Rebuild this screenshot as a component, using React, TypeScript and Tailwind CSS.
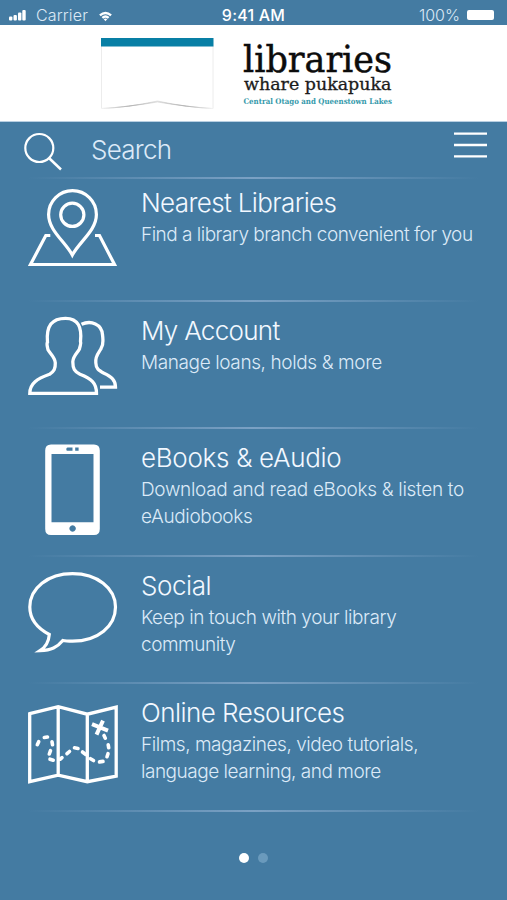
import type { ReactNode } from 'react';

interface MenuItem {
  title: string;
  titleClass: string;
  lines: { text: string; className: string }[];
  icon: ReactNode;
}

const items: MenuItem[] = [
  {
    title: 'Nearest Libraries',
    titleClass: 'tracking-[-0.63px]',
    lines: [{ text: 'Find a library branch convenient for you', className: 'tracking-[-0.51px]' }],
    icon: <PinIcon />,
  },
  {
    title: 'My Account',
    titleClass: 'tracking-[-0.7px]',
    lines: [{ text: 'Manage loans, holds & more', className: 'tracking-[-0.39px]' }],
    icon: <PeopleIcon />,
  },
  {
    title: 'eBooks & eAudio',
    titleClass: 'tracking-[-0.3px]',
    lines: [
      { text: 'Download and read eBooks & listen to', className: 'tracking-[-0.32px]' },
      { text: 'eAudiobooks', className: 'tracking-[-0.36px]' },
    ],
    icon: <TabletIcon />,
  },
  {
    title: 'Social',
    titleClass: 'tracking-[-0.45px]',
    lines: [
      { text: 'Keep in touch with your library', className: 'tracking-[-0.43px]' },
      { text: 'community', className: 'tracking-[-0.45px]' },
    ],
    icon: <SpeechIcon />,
  },
  {
    title: 'Online Resources',
    titleClass: 'tracking-[-0.54px]',
    lines: [
      { text: 'Films, magazines, video tutorials,', className: 'tracking-[-0.46px]' },
      { text: 'language learning, and more', className: 'tracking-[-0.48px]' },
    ],
    icon: <MapIcon />,
  },
];

function PinIcon() {
  return (
    <svg width="94" height="94" viewBox="0 3.5 94 94" fill="none" stroke="currentColor" strokeWidth="3.2">
      <path d="M47.300 71.500C40 58 23.600 47 23.600 31A23.900 23.900 0 0 1 71.400 31C71.400 47 54.500 58 47.300 71.500Z" />
      <circle cx="47.300" cy="31.300" r="11.600" />
      <path d="M25.300 52H20.800L5.500 81H89.500L74.500 52H70" />
    </svg>
  );
}

function PeopleIcon() {
  return (
    <svg width="94" height="94" viewBox="0 2.2 94 94" fill="none" stroke="currentColor" strokeWidth="3.3">
      <path d="M4.800 80.500H71.500C71.500 70 66.500 66 55 61.500C49.500 58.500 47.800 56 47.800 49C48 43 53 39.500 54.500 36C55 33 56.500 31 55.500 28.500C57 15 53.500 5.500 40.500 5.500C27 5.500 21 13 22.500 29.500C21.300 31 22.300 33.500 23 37C25 41 29.800 44 30.300 50C30.500 56 29 58.500 24.500 61.500C12 66 5 70.500 4.800 80.500Z" />
      <path d="M56.500 11.500C66 7 77 11.500 77.500 22C78 26 78.200 28 77.700 30C78 33 76.500 33.500 76 36C73.500 40.500 70 43 70.800 50C71 56 73.500 57.500 79 60.500C86.500 64 90.500 67 90.500 74.300H75" />
    </svg>
  );
}

function TabletIcon() {
  return (
    <svg width="94" height="94" viewBox="0 -0.5 94 94">
      <path
        fill="currentColor"
        fillRule="evenodd"
        d="M26 2H69Q74.800 2 74.800 8V86.500Q74.800 92.500 69 92.500H26Q20.200 92.500 20.200 86.500V8Q20.200 2 26 2ZM26.500 11.500V79.800H68.500V11.500ZM42.500 5Q41.300 5 41.300 6.700T42.500 8.300H47.500V5ZM50.200 5V8.300H53.600V5ZM47.600 82.800A3.200 3.200 0 1 0 47.610 82.800Z"
      />
    </svg>
  );
}

function SpeechIcon() {
  return (
    <svg width="94" height="94" viewBox="0 0 94 94" fill="none" stroke="currentColor" strokeWidth="3.2">
      <path d="M24.300 64.500C12 58 4.800 48.500 4.800 37C4.800 18 23 3.600 47.500 3.600S90.500 18 90.500 37S73 71.200 47.500 71.200C43 71.200 40 71 37.800 70.500C32 77.500 26.500 80.300 15 80.700C21.500 76.500 23.800 71.500 24.300 64.500Z" />
    </svg>
  );
}

function MapIcon() {
  return (
    <svg width="94" height="94" viewBox="0 -5.2 94 94" fill="none" stroke="currentColor" strokeWidth="3.3">
      <path d="M4.700 11.500L33.200 4.500L62.300 12L91.200 5V74L62.300 79.500L33.200 73L4.700 79.500ZM33.200 4.500V73M62.300 12V79.500" />
      <g strokeWidth="3.600" strokeLinecap="round">
        <path d="M12.300 42.500L13.700 39.500M19.300 35.300L22.500 34.800M27 39.500L27.500 42.500M25.500 48.500L24.300 51.800M25 57L28.200 58M35.300 57L37 55.500M42 51.500L44.500 49.300M49.500 45.600L53 46.200M57.500 49.800L60.500 52.200M65.500 56.500L68.500 58.300M74.500 59.700L78 59.200M82 54.500L83 51.500M83.700 45.500L83.200 42.500M80.300 36L79 33.300" />
        <path d="M67 22L83 28.500M78 18.500L71.500 32.500" strokeWidth="4" strokeLinecap="butt" />
      </g>
    </svg>
  );
}

function StatusBar() {
  return (
    <div className="grid h-[25px] grid-cols-3 items-center px-[9px] pt-[5px] font-['Inter','Liberation_Sans',sans-serif] text-[16px] leading-5 text-[#dce9f5]">
      <div className="flex items-center">
        <svg width="17" height="12" viewBox="0 0 17 12" fill="white">
          <rect x="0" y="7.500" width="3.400" height="4" rx="1" />
          <rect x="4.500" y="6" width="3.400" height="5.500" rx="1" />
          <rect x="9" y="3.500" width="3.400" height="8" rx="1" />
          <rect x="13.300" y="1" width="3.400" height="10.500" rx="1" />
        </svg>
        <span className="ml-2.5 tracking-[0.15px]">Carrier</span>
        <svg className="ml-[11px] mt-[2px]" width="13" height="11" viewBox="0 0 14 11" fill="none" stroke="white" strokeWidth="2.600">
          <path d="M1 4.300Q7 -0.700 13 4.300" />
          <path d="M3.600 7Q7 4 10.400 7" />
          <path d="M5 8.300Q7 7 9 8.300L7 10.600Z" fill="white" stroke="none" />
        </svg>
      </div>
      <span className="text-center text-[16px] font-medium tracking-[0.2px] text-white">9:41 AM</span>
      <div className="flex items-center justify-end gap-[7px] pr-[4px]">
        <span>100%</span>
        <span className="h-[10px] w-[27px] rounded-[2px] bg-white" />
      </div>
    </div>
  );
}

function Header() {
  return (
    <header className="h-[97px] border-b border-[#b8cfe2] bg-white">
      <svg width="507" height="96" viewBox="0 25 507 96">
        <defs>
          <linearGradient id="fold" x1="0" x2="1">
            <stop offset="0" stopColor="#f2f2f2" />
            <stop offset="0.250" stopColor="#aaa" />
            <stop offset="0.500" stopColor="#ddd" />
            <stop offset="0.750" stopColor="#aaa" />
            <stop offset="1" stopColor="#f2f2f2" />
          </linearGradient>
        </defs>
        <path d="M101.500 46V108.500M213 46V108.500" stroke="#ececec" />
        <path d="M101.500 108.500Q128 107.500 157.500 101Q187 107.500 213 108.500Q188 107 157.500 102Q127 107 101.500 108.500Z" fill="url(#fold)" stroke="url(#fold)" strokeWidth="0.700" />
        <rect x="101" y="38" width="112.500" height="8.500" fill="#087fa5" />
        <g className="font-['DejaVu_Serif',serif]">
          <text x="243" y="72" fontSize="37" textLength="149" lengthAdjust="spacingAndGlyphs" fill="#0c0c0c" stroke="#0c0c0c" strokeWidth="0.500">
            libraries
          </text>
          <text x="244" y="90.300" fontSize="16.500" textLength="147.500" lengthAdjust="spacingAndGlyphs" fill="#1c1c1c" stroke="#1c1c1c" strokeWidth="0.300">
            whare pukapuka
          </text>
          <text x="243.500" y="103.700" fontSize="7.900" fontWeight="700" textLength="148.500" lengthAdjust="spacingAndGlyphs" fill="#369aab">
            Central Otago and Queenstown Lakes
          </text>
        </g>
      </svg>
    </header>
  );
}

function Divider() {
  return (
    <div className="mx-[28px] h-[2px] shrink-0 bg-linear-to-r from-transparent via-[#7ba1c4] to-transparent" />
  );
}

function SearchBar() {
  return (
    <div className="flex h-[54.500px] shrink-0 items-start pr-[20px] pl-[24px]">
      <svg className="mt-[10px]" width="39" height="39" viewBox="0 0 39 39" fill="none" stroke="white" strokeWidth="2.200">
        <circle cx="15.300" cy="16" r="14" />
        <path d="M25.500 26.500L37 37.500" strokeWidth="2.500" />
      </svg>
      <span className="mt-[10px] ml-[28px] flex-1 text-[26px] leading-9 tracking-[-0.75px] text-[#dceaf8]">Search</span>
      <svg className="mt-[10px]" width="33" height="28" viewBox="0 0 33 28" stroke="white" strokeWidth="2.400">
        <path d="M0 1.600H33M0 13H33M0 24.400H33" />
      </svg>
    </div>
  );
}

function MenuRow({ item }: { item: MenuItem }) {
  return (
    <div className="flex h-[125.600px] pl-[25px]">
      <div className="mt-[13px] w-[94px] shrink-0 text-white">{item.icon}</div>
      <div className="mt-[10px] ml-[22px] whitespace-nowrap">
        <h2 className={`text-[26px] leading-[37px] text-[#f2f8ff] ${item.titleClass}`}>{item.title}</h2>
        {item.lines.map((line) => (
          <p key={line.text} className={`text-[19px] leading-[27px] text-[#dceaf8] ${line.className}`}>
            {line.text}
          </p>
        ))}
      </div>
    </div>
  );
}

export default function App() {
  return (
    <div className="flex h-[900px] w-[507px] flex-col overflow-hidden bg-[#447ba2] font-['Inter','Liberation_Sans',sans-serif] font-light">
      <StatusBar />
      <Header />
      <SearchBar />
      <Divider />
      <main className="-mt-[4.500px]">
        {items.map((item) => (
          <div key={item.title}>
            <MenuRow item={item} />
            <Divider />
          </div>
        ))}
      </main>
      <div className="mt-[41px] flex justify-center gap-[9px]">
        <span className="size-[10px] rounded-full bg-white" />
        <span className="size-[10px] rounded-full bg-[#6a9abc]" />
      </div>
    </div>
  );
}
